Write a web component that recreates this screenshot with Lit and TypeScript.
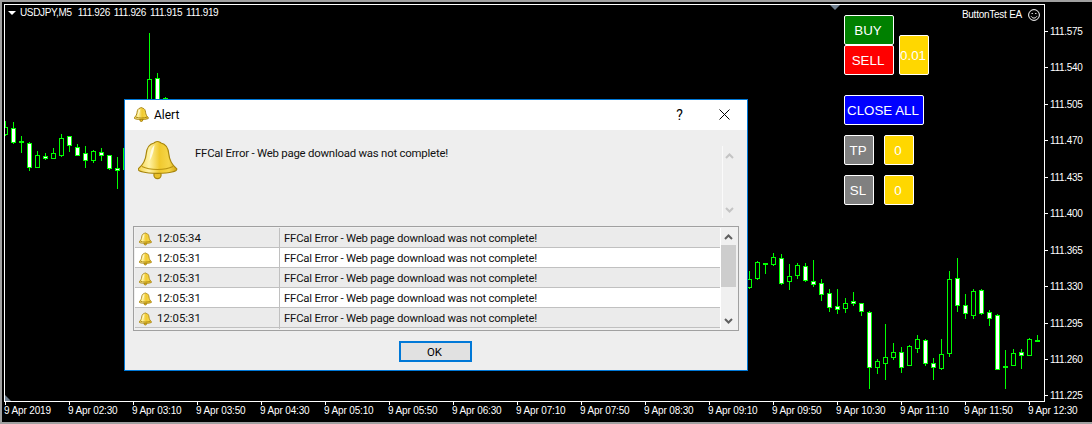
import { LitElement, html, css, svg } from "lit";
import { customElement } from "lit/decorators.js";

type Candle = [number, number, number, number, number, boolean];

const CANDLES: Candle[] = [
  [5,121,135,127,134,false],[13,122,143,128,142,true],[21,136,152,141,142,true],[29,142,170,143,167,true],
  [37,151,167,155,167,false],[45,153,159,156,158,true],[53,148,158,153,158,false],[61,134,156,138,155,false],
  [69,136,151,136,145,true],[77,144,155,147,155,true],[85,146,167,153,160,true],[93,150,162,151,160,false],
  [101,148,160,152,155,true],[109,155,169,155,168,true],[117,157,188,168,170,true],[125,148,169,148,169,false],
  [149,33,110,79,110,false],[157,73,110,78,110,true],[165,97,110,98,104,false],
  [749,271,288,279,287,false],[757,261,279,262,278,false],[765,263,273,263,264,true],[773,253,265,257,264,false],
  [781,254,284,258,283,true],[789,264,289,276,281,false],[797,263,278,265,275,false],[805,263,281,266,280,true],
  [813,260,286,281,284,true],[821,279,300,283,294,true],[829,289,311,293,307,true],[837,289,313,306,309,true],
  [845,298,312,303,308,false],[853,292,305,301,303,true],[861,303,315,303,311,true],[869,311,388,312,367,true],
  [877,359,373,361,367,false],[885,324,379,357,363,false],[893,343,359,352,357,false],[901,347,372,352,367,true],
  [909,345,365,346,365,false],[917,335,352,339,348,false],[925,339,365,340,363,true],[933,358,379,363,367,true],
  [941,339,369,354,368,false],[949,271,356,279,353,false],[957,258,311,278,305,true],[965,294,318,305,313,true],
  [973,289,318,291,315,false],[981,289,314,290,313,true],[989,310,325,312,318,true],[997,314,369,315,369,true],
  [1005,350,388,366,367,true],[1013,349,365,353,365,false],[1021,349,368,352,355,true],[1029,338,355,339,355,false],
  [1037,335,341,340,341,true],
];

const PRICES = ["111.575","111.540","111.505","111.470","111.435","111.400","111.365","111.330","111.295","111.260","111.225"];
const TIMES = ["9 Apr 2019","9 Apr 02:30","9 Apr 03:10","9 Apr 03:50","9 Apr 04:30","9 Apr 05:10","9 Apr 05:50","9 Apr 06:30","9 Apr 07:10","9 Apr 07:50","9 Apr 08:30","9 Apr 09:10","9 Apr 09:50","9 Apr 10:30","9 Apr 11:10","9 Apr 11:50","9 Apr 12:30"];
const ROWS = ["12:05:34","12:05:31","12:05:31","12:05:31","12:05:31"];
const MESSAGE = "FFCal Error - Web page download was not complete!";

const bell = (cls: string, id: string) => html`
  <svg class=${cls} viewBox="0 0 40 40" aria-hidden="true">
    <defs>
      <linearGradient id=${id} x1="0" x2="1" y1="0" y2="0">
        <stop offset="0" stop-color="#f4d24a"/>
        <stop offset=".28" stop-color="#fff3a6"/>
        <stop offset=".55" stop-color="#f0c92e"/>
        <stop offset=".8" stop-color="#f6d64a"/>
        <stop offset="1" stop-color="#d3a514"/>
      </linearGradient>
    </defs>
    <circle class="ol" cx="19.5" cy="35" r="3.6" fill="#e9c02a" stroke="#a8860c" stroke-width="1.2"/>
    <path class="ol" d="M19.5 1.5C21 1.5 22 2.4 23 3C28 4 30.2 8 30.8 14C31.4 20 34 25 38.6 28.6C39.4 30.4 37 31.2 34 32C28 33.8 11 33.8 5 32C2 31.2-.4 30.4.4 28.6C5 25 7.6 20 8.2 14C8.8 8 11 4 16 3C17 2.4 18 1.5 19.5 1.5Z" fill="url(#${id})" stroke="#a8860c" stroke-width="1.2"/>
    <path class="ol" d="M4 26.5C12 30.5 27 30.5 35 26.5" fill="none" stroke="#b8920f" stroke-width="1.2"/>
    <path d="M11.5 21C12 13 13 8 16.5 5C15.8 10 15 15 11.5 21Z" fill="#fffbe0"/>
  </svg>`;

@customElement("app-root")
export class AppRoot extends LitElement {
  static styles = css`
    :host { display: block; width: 1092px; height: 424px; overflow: hidden; background: #a0a0a0; position: relative; font-family: "Liberation Sans", Arial, sans-serif; }
    .term { margin: 2px 0 0 2px; width: 1090px; height: 420px; box-sizing: border-box; padding: 2px 0 0 2px; background: #000; display: grid; grid-template-columns: 1041px 1fr; grid-template-rows: 398px 1fr; color: #fff; }
    .plot { position: relative; border: 1px solid #fff; box-sizing: border-box; }
    .candles { position: absolute; inset: 0; width: 1039px; height: 396px; display: block; }
    .head { position: absolute; left: 3px; top: 1px; display: flex; align-items: center; height: 13px; gap: 4px; font-size: 10px; letter-spacing: -.35px; white-space: pre; }
    .sym { margin-right: 2px; }
    .quotes { word-spacing: 1.5px; }
    .caret { width: 0; height: 0; border-left: 4px solid transparent; border-right: 4px solid transparent; border-top: 4px solid #fff; }
    .ea { position: absolute; right: 4px; top: 4px; display: flex; align-items: center; gap: 6px; font-size: 10px; letter-spacing: -.25px; }
    .ea-text { padding-bottom: 1px; }
    .smile { width: 12px; height: 12px; display: block; }
    .mark-top { position: absolute; left: 825px; top: 0; width: 0; height: 0; border-left: 5px solid transparent; border-right: 5px solid transparent; border-top: 5px solid #708090; }
    .mark-bot { position: absolute; left: 0; bottom: 0; width: 0; height: 0; border-right: 6px solid transparent; border-bottom: 6px solid #708090; }
    .prices { display: grid; grid-auto-rows: 36.45px; padding-top: 21px; align-content: start; font-size: 10px; letter-spacing: -.3px; }
    .price { display: flex; align-items: center; gap: 2px; height: 13px; }
    .price::before { content: ""; width: 3px; height: 1px; background: #fff; }
    .times { display: grid; grid-template-columns: repeat(17, 64px); font-size: 10px; letter-spacing: -.15px; }
    .time { position: relative; padding-top: 2px; line-height: 13px; white-space: nowrap; }
    .time::before { content: ""; position: absolute; left: 1px; top: 0; width: 1px; height: 3px; background: #fff; }

    .panel { position: absolute; left: 844px; top: 15px; display: flex; flex-direction: column; gap: 10px; }
    .row-b { display: flex; gap: 10px; }
    .row-top { display: flex; gap: 5px; align-items: flex-end; margin-bottom: 10px; }
    .stack { display: flex; flex-direction: column; }
    .btn { box-sizing: border-box; height: 30px; border: 1px solid #fff; border-radius: 2px; padding-right: 2px; display: flex; align-items: center; justify-content: center; color: #fff; font-size: 13.33px; white-space: nowrap; }
    .w50 { width: 50px; } .w30 { width: 30px; } .w80 { width: 80px; }
    .h40 { height: 40px; }
    .green { background: #008000; } .red { background: #f00; } .gold { background: #ffd700; } .blue { background: #00f; } .gray { background: #808080; }

    .dialog { position: absolute; left: 124px; top: 99px; width: 624px; height: 272px; box-sizing: border-box; border: 1px solid #0078d7; background: #eee; display: flex; flex-direction: column; color: #000; font-family: Roboto, sans-serif; font-size: 11.4px; }
    .title { height: 30px; flex: none; background: #fff; display: flex; align-items: center; padding-left: 9px; padding-bottom: 1px; box-sizing: border-box; font-size: 12px; }
    .bell-s { width: 15px; height: 15px; flex: none; display: block; }
    .title-text { margin-left: 5px; flex: 1; }
    .help { width: 15px; text-align: center; font-size: 14px; margin-right: 32px; }
    .close { width: 11px; height: 11px; margin-right: 17px; display: block; }
    .msg { height: 96px; flex: none; display: flex; box-sizing: border-box; padding: 10px 0 0 13px; }
    .bell-l { width: 40px; height: 40px; flex: none; display: block; }
    .msg-text { margin-left: 17px; margin-top: 6px; width: 527px; color: #111; line-height: 14px; letter-spacing: -.22px; }
    .msg-scroll { width: 1px; height: 72px; margin-top: 6px; background: #fafafa; position: relative; flex: none; }
    .chev { position: absolute; left: 3px; width: 9px; height: 6px; display: block; }
    .msg-scroll .chev.up { top: 7px; } .msg-scroll .chev.dn { bottom: 5px; }
    .list { margin-left: 8px; width: 606px; height: 105px; box-sizing: border-box; border: 1px solid #a0a0a0; padding: 1px; display: flex; background: #f0f0f0; flex: none; }
    .rows { width: 585px; flex: none; position: relative; }
    .rows::after { content: ""; position: absolute; left: 144px; bottom: 0; width: 1px; height: 1px; background: #c0c0c0; }
    .r { height: 20px; box-sizing: border-box; border-bottom: 1px solid #c0c0c0; display: grid; grid-template-columns: 145px 1fr; line-height: 21px; color: #111; }
    .r:nth-child(odd) { background: #ebebeb; }
    .r:nth-child(even) { background: #fff; }
    .c1 { display: flex; align-items: center; gap: 5px; padding-left: 4px; border-right: 1px solid #c0c0c0; }
    .c2 { padding-left: 4px; white-space: nowrap; letter-spacing: -.22px; }
    .bell-r { width: 13px; height: 14px; flex: none; display: block; }
    .bell-r .ol, .bell-s .ol { stroke-width: 2.4; stroke: #a07c08; }
    .sb { position: relative; flex: 1; border-left: 1px solid #fff; }
    .thumb { position: absolute; left: 0; top: 17px; width: 15px; height: 42px; background: #cdcdcd; }
    .sb .chev.up { top: 6px; } .sb .chev.dn { bottom: 5px; }
    .foot { flex: 1; display: flex; justify-content: center; padding: 10px 1px 0 0; align-items: flex-start; }
    .ok { box-sizing: border-box; width: 73px; height: 21px; border: 2px solid #0078d7; background: #e1e1e1; padding-right: 2px; display: flex; align-items: center; justify-content: center; }
  `;

  private chev(cls: string, color: string, down: boolean) {
    return html`<svg class="chev ${cls}" viewBox="0 0 9 6" aria-hidden="true"><path d=${down ? "M1 1L4.5 4.5L8 1" : "M1 5L4.5 1.5L8 5"} fill="none" stroke=${color} stroke-width="2"/></svg>`;
  }

  render() {
    return html`
      <div class="term">
        <div class="plot">
          <svg class="candles" viewBox="5 5 1039 396" shape-rendering="crispEdges" aria-hidden="true">
            ${CANDLES.map(([x, wt, wb, bt, bb, fill]) => svg`
              <line x1=${x + 0.5} x2=${x + 0.5} y1=${wt} y2=${wb + 1} stroke="#0f0"/>
              <rect x=${x - 1.5} y=${bt + 0.5} width="4" height=${bb - bt} fill=${fill ? "#fff" : "#000"} stroke="#0f0"/>
            `)}
          </svg>
          <div class="head"><span class="caret"></span><span class="sym">USDJPY,M5</span><span class="quotes">111.926 111.926 111.915 111.919</span></div>
          <div class="ea"><span class="ea-text">ButtonTest EA</span>
            <svg class="smile" viewBox="0 0 12 12" aria-hidden="true"><circle cx="6" cy="6" r="5.4" fill="none" stroke="#fff"/><path d="M3.6 4.5h1.2M7.2 4.5h1.2" stroke="#fff"/><path d="M3.2 7.4C4.6 9.6 7.4 9.6 8.8 7.4" fill="none" stroke="#fff"/></svg>
          </div>
          <div class="mark-top"></div>
          <div class="mark-bot"></div>
        </div>
        <div class="prices">${PRICES.map((p) => html`<div class="price">${p}</div>`)}</div>
        <div class="times">${TIMES.map((t) => html`<div class="time">${t}</div>`)}</div>
      </div>

      <div class="panel">
        <div class="row-top">
          <div class="stack">
            <div class="btn w50 green">BUY</div>
            <div class="btn w50 red">SELL</div>
          </div>
          <div class="btn w30 h40 gold">0.01</div>
        </div>
        <div class="btn w80 blue">CLOSE ALL</div>
        <div class="row-b"><div class="btn w30 gray">TP</div><div class="btn w30 gold">0</div></div>
        <div class="row-b"><div class="btn w30 gray">SL</div><div class="btn w30 gold">0</div></div>
      </div>

      <div class="dialog">
        <div class="title">
          ${bell("bell-s", "g1")}
          <span class="title-text">Alert</span>
          <span class="help">?</span>
          <svg class="close" viewBox="0 0 11 11" aria-hidden="true"><path d="M.5.5L10.5 10.5M10.5.5L.5 10.5" stroke="#000" fill="none"/></svg>
        </div>
        <div class="msg">
          ${bell("bell-l", "g2")}
          <div class="msg-text">${MESSAGE}</div>
          <div class="msg-scroll">${this.chev("up", "#c4c4c4", false)}${this.chev("dn", "#c4c4c4", true)}</div>
        </div>
        <div class="list">
          <div class="rows">
            ${ROWS.map((t, i) => html`<div class="r"><div class="c1">${bell("bell-r", "gr" + i)}<span>${t}</span></div><div class="c2">${MESSAGE}</div></div>`)}
          </div>
          <div class="sb"><div class="thumb"></div>${this.chev("up", "#606060", false)}${this.chev("dn", "#606060", true)}</div>
        </div>
        <div class="foot"><div class="ok">OK</div></div>
      </div>
    `;
  }
}
